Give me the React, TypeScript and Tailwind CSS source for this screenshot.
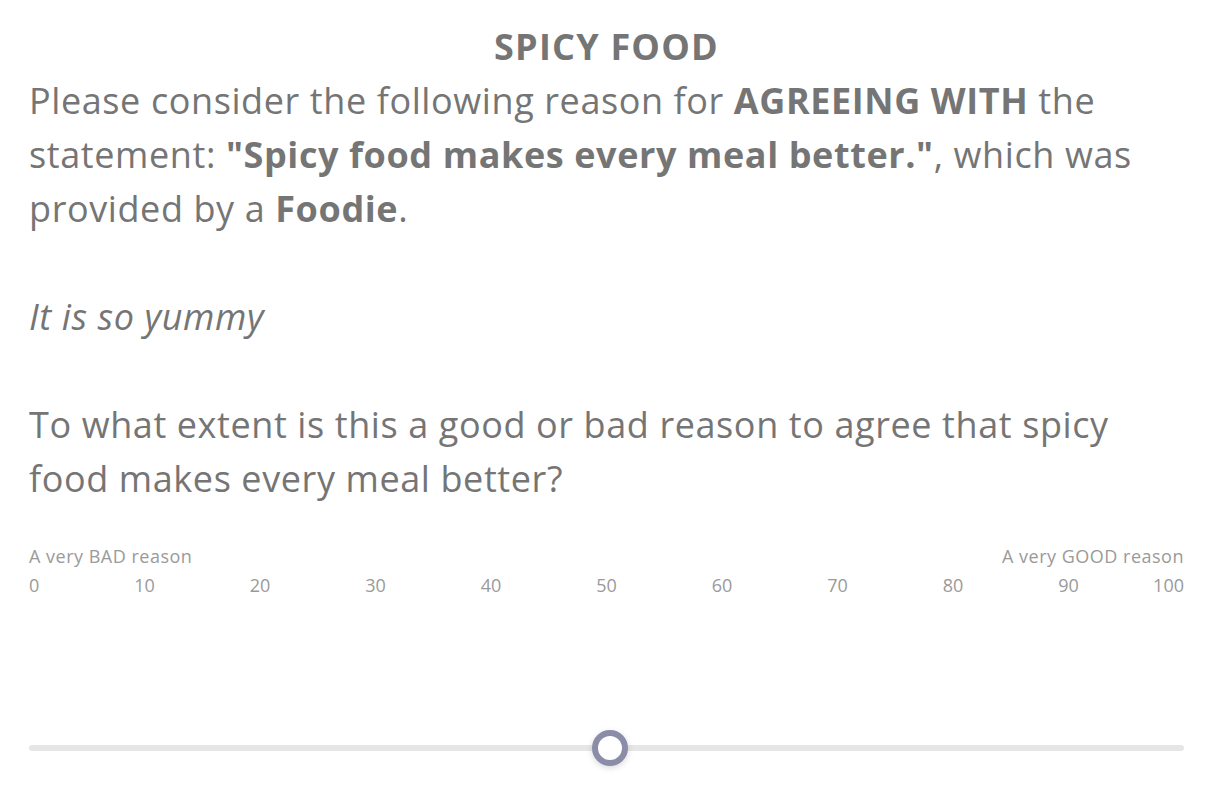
import React from "react";

const ticks = [0, 10, 20, 30, 40, 50, 60, 70, 80, 90, 100];

export default function App() {
  const value = 50;
  return (
    <div
      className="min-h-screen bg-white pl-[29px] pr-[42px] pt-[20px] text-[#757575]"
      style={{ fontFamily: '"Open Sans", "DejaVu Sans", sans-serif' }}
    >
      <h1 className="text-center text-[36px] font-bold leading-[54px] tracking-[1.2px]">SPICY FOOD</h1>

      <div className="text-[36px] leading-[54px] tracking-[0.6px]">
        <p>
          Please consider the following reason for <b>AGREEING WITH</b> the statement:{" "}
          <b>"Spicy food makes every meal better."</b>, which was provided by a <b>Foodie</b>.
        </p>
        <p className="mt-[54px] italic">It is so yummy</p>
        <p className="mt-[54px]">
          To what extent is this a good or bad reason to agree that spicy food makes every meal better?
        </p>
      </div>

      <div className="mt-[36px] text-[18px] leading-[29px] text-[#9a9a9a]">
        <div className="flex justify-between tracking-[0.5px]">
          <span>A very BAD reason</span>
          <span>A very GOOD reason</span>
        </div>
        <div className="relative h-[29px]">
          {ticks.map((t, i) => (
            <span
              key={t}
              className={
                i === 0
                  ? "absolute left-0"
                  : i === ticks.length - 1
                  ? "absolute right-0"
                  : "absolute -translate-x-1/2"
              }
              style={i === 0 || i === ticks.length - 1 ? undefined : { left: `${t}%` }}
            >
              {t}
            </span>
          ))}
        </div>
      </div>

      <div className="relative mt-[145px] h-[6px] rounded-full bg-[#e6e6e6]">
        <div
          className="absolute top-1/2 h-9 w-9 -translate-x-1/2 -translate-y-1/2 rounded-full border-[6px] border-[#8b8da8] bg-white shadow-[0_2px_6px_rgba(0,0,0,0.15)]"
          style={{ left: `calc(${value}% + 3px)` }}
        />
      </div>
    </div>
  );
}
